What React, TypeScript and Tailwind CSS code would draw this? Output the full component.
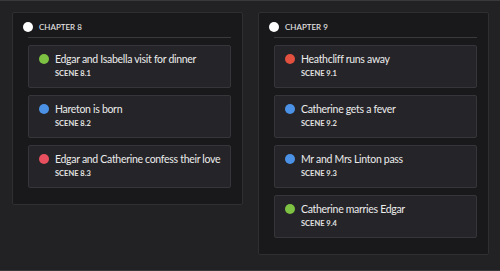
const chapters = [
  {
    title: "CHAPTER 8",
    scenes: [
      { name: "Edgar and Isabella visit for dinner", label: "SCENE 8.1", color: "#7dc242" },
      { name: "Hareton is born", label: "SCENE 8.2", color: "#4b92e6" },
      { name: "Edgar and Catherine confess their love", label: "SCENE 8.3", color: "#e8505f" },
    ],
  },
  {
    title: "CHAPTER 9",
    scenes: [
      { name: "Heathcliff runs away", label: "SCENE 9.1", color: "#e2503f" },
      { name: "Catherine gets a fever", label: "SCENE 9.2", color: "#4b92e6" },
      { name: "Mr and Mrs Linton pass", label: "SCENE 9.3", color: "#4b92e6" },
      { name: "Catherine marries Edgar", label: "SCENE 9.4", color: "#7dc242" },
    ],
  },
];

export default function App() {
  return (
    <div
      className="h-[271px] w-[500px] border-y border-[#39393c] bg-[#222124] pl-[12px] pt-[11px] flex items-start gap-[15px]"
      style={{ fontFamily: 'Lato, "Noto Sans", sans-serif' }}
    >
      {chapters.map((ch) => (
        <div key={ch.title} className="w-[231px] border border-[#2f2e31] bg-[#19191b] rounded-[2px]">
          <div className="flex items-center h-[24px] pl-[10px] pt-[3px] gap-[6px]">
            <span className="w-[10px] h-[10px] rounded-full bg-white" />
            <span className="text-[8px] font-medium text-[#e6e6e6]">{ch.title}</span>
          </div>
          <div className="ml-[15px] mr-[11px] border-t border-[#3a393d] pt-[7px] pb-[16px] flex flex-col gap-[7px]">
            {ch.scenes.map((s) => (
              <div
                key={s.label}
                className="h-[43px] border border-[#363539] bg-[#252428] rounded-[2px] pl-[10px] pt-[5px] flex gap-[6px]"
              >
                <div className="h-[16px] flex items-center">
                  <span className="w-[10px] h-[10px] rounded-full" style={{ backgroundColor: s.color }} />
                </div>
                <div className="flex flex-col">
                  <span className="text-[10.5px] leading-[16px] tracking-[-0.3px] whitespace-nowrap text-[#ececec]">
                    {s.name}
                  </span>
                  <span className="mt-[1px] text-[7.5px] leading-[12px] font-bold text-[#e2e2e2]">{s.label}</span>
                </div>
              </div>
            ))}
          </div>
        </div>
      ))}
    </div>
  );
}
